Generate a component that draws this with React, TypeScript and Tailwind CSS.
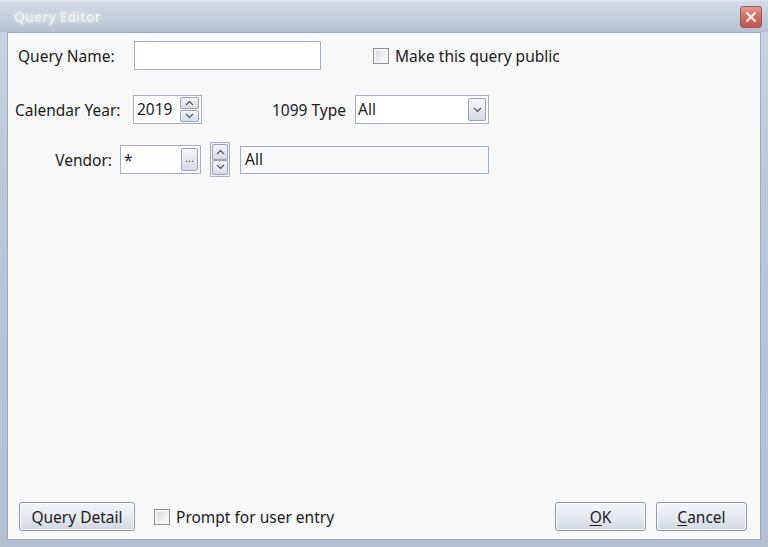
import React from "react";

const font = { fontFamily: '"Noto Sans", "Open Sans", Arial, sans-serif' };

function Chevron({ dir }: { dir: "up" | "down" }) {
  return (
    <svg width="9" height="6" viewBox="0 0 9 6" className="block">
      {dir === "up" ? (
        <path d="M1 5 L4.5 1.5 L8 5" fill="none" stroke="#4a5566" strokeWidth="1.2" />
      ) : (
        <path d="M1 1 L4.5 4.5 L8 1" fill="none" stroke="#4a5566" strokeWidth="1.2" />
      )}
    </svg>
  );
}

function MiniButton({ className, children }: { className: string; children?: React.ReactNode }) {
  return (
    <div
      className={`flex items-center justify-center rounded-[2px] border border-[#97a3b4] bg-gradient-to-b from-[#f4f6f9] to-[#d6dce5] ${className}`}
    >
      {children}
    </div>
  );
}

function Checkbox() {
  return (
    <div className="h-[16px] w-[16px] border border-[#8f9094] bg-[#f4f4f4] p-[2px]">
      <div className="h-full w-full bg-gradient-to-br from-[#d9dbdf] to-[#fbfbfb]" />
    </div>
  );
}

function PushButton({ children, className }: { children: React.ReactNode; className: string }) {
  return (
    <div
      className={`flex h-[29px] items-center justify-center rounded-[3px] border border-[#8c97a7] bg-gradient-to-b from-[#f3f5f8] via-[#e6eaf0] to-[#d3d9e2] pt-[2px] text-[15.5px] text-[#1b1b1b] shadow-[inset_0_0_0_1px_#fbfcfd] ${className}`}
    >
      {children}
    </div>
  );
}

export default function App() {
  return (
    <div
      className="flex h-[547px] w-[768px] flex-col bg-gradient-to-b from-[#c9d4e1] via-[#b8c5d6] to-[#b3c0d1]"
      style={font}
    >
      {/* title bar */}
      <div className="flex h-[32px] shrink-0 items-start justify-between border-t border-[#dfe6ee] bg-gradient-to-b from-[#d3dce7] to-[#b4c2d3]">
        <div
          className="ml-[14px] mt-[5px] text-[14px] font-semibold text-[#eef2f7]"
          style={{ textShadow: "0 0 4px #ffffff, 0 0 1px #8594a8" }}
        >
          Query Editor
        </div>
        <div className="mr-[6px] mt-[5px] flex h-[22px] w-[22px] items-center justify-center rounded-[3px] border border-[#9c5a55] bg-gradient-to-b from-[#e29b94] via-[#cf6b63] to-[#c2544c]">
          <svg width="12" height="12" viewBox="0 0 12 12">
            <path d="M2 2 L10 10 M10 2 L2 10" stroke="#ffffff" strokeWidth="2.2" strokeLinecap="round" opacity="0.9" />
          </svg>
        </div>
      </div>

      {/* client area */}
      <div className="mx-[7px] mb-[7px] flex flex-1 flex-col border border-[#9aabc0] bg-[#f8f8f8] text-[15.5px] text-[#1b1b1b]">
        {/* query name row */}
        <div className="mt-[8px] flex h-[29px] items-center">
          <div className="w-[126px] pl-[10px] pt-[2px]">Query Name:</div>
          <div className="h-[29px] w-[187px] border border-[#a4b0c0] bg-white" />
          <div className="ml-[52px] flex items-center gap-[6px]">
            <Checkbox />
            <span className="pt-[2px]">Make this query public</span>
          </div>
        </div>

        {/* year / type row */}
        <div className="mt-[25px] flex h-[29px] items-center">
          <div className="w-[125px] pl-[7px] pt-[2px]">Calendar Year:</div>
          <div className="flex h-[29px] w-[69px] items-center justify-between border border-[#a4b0c0] bg-white pl-[3px] pr-[2px]">
            <span className="pt-[1px]">2019</span>
            <div className="flex flex-col gap-[1px]">
              <MiniButton className="h-[12px] w-[19px]">
                <Chevron dir="up" />
              </MiniButton>
              <MiniButton className="h-[12px] w-[19px]">
                <Chevron dir="down" />
              </MiniButton>
            </div>
          </div>
          <div className="ml-[70px] w-[83px] pt-[2px]">1099 Type</div>
          <div className="flex h-[29px] w-[134px] items-center justify-between border border-[#a4b0c0] bg-white pl-[2px] pr-[2px]">
            <span className="pt-[1px]">All</span>
            <MiniButton className="h-[23px] w-[18px]">
              <Chevron dir="down" />
            </MiniButton>
          </div>
        </div>

        {/* vendor row */}
        <div className="mt-[18px] flex h-[35px] items-center">
          <div className="w-[104px] pt-[2px] text-right">Vendor:</div>
          <div className="ml-[8px] flex h-[29px] w-[81px] items-center justify-between border border-[#a4b0c0] bg-white pl-[3px] pr-[2px]">
            <span className="self-start pt-[3px]">*</span>
            <MiniButton className="h-[23px] w-[17px]">
              <span className="mb-[4px] text-[11px] leading-none text-[#4a5566]">...</span>
            </MiniButton>
          </div>
          <div className="ml-[9px] flex h-[35px] w-[20px] flex-col border border-[#a9b4c2] bg-[#eef0f3] p-[1px]">
            <MiniButton className="h-[16px] w-full">
              <Chevron dir="up" />
            </MiniButton>
            <MiniButton className="h-[16px] w-full">
              <Chevron dir="down" />
            </MiniButton>
          </div>
          <div className="ml-[10px] flex h-[28px] w-[249px] items-center border border-[#a4b0c0] bg-[#fafafa] pl-[4px] pt-[1px]">
            All
          </div>
        </div>

        <div className="flex-1" />

        {/* bottom row */}
        <div className="mb-[8px] flex h-[29px] items-center">
          <PushButton className="ml-[11px] w-[116px]">Query Detail</PushButton>
          <div className="ml-[19px] flex items-center gap-[6px]">
            <Checkbox />
            <span className="pt-[2px]">Prompt for user entry</span>
          </div>
          <div className="flex-1" />
          <PushButton className="w-[91px]">
            <span>
              <span className="underline underline-offset-2">O</span>K
            </span>
          </PushButton>
          <PushButton className="ml-[10px] mr-[13px] w-[91px]">
            <span>
              <span className="underline underline-offset-2">C</span>ancel
            </span>
          </PushButton>
        </div>
      </div>
    </div>
  );
}
